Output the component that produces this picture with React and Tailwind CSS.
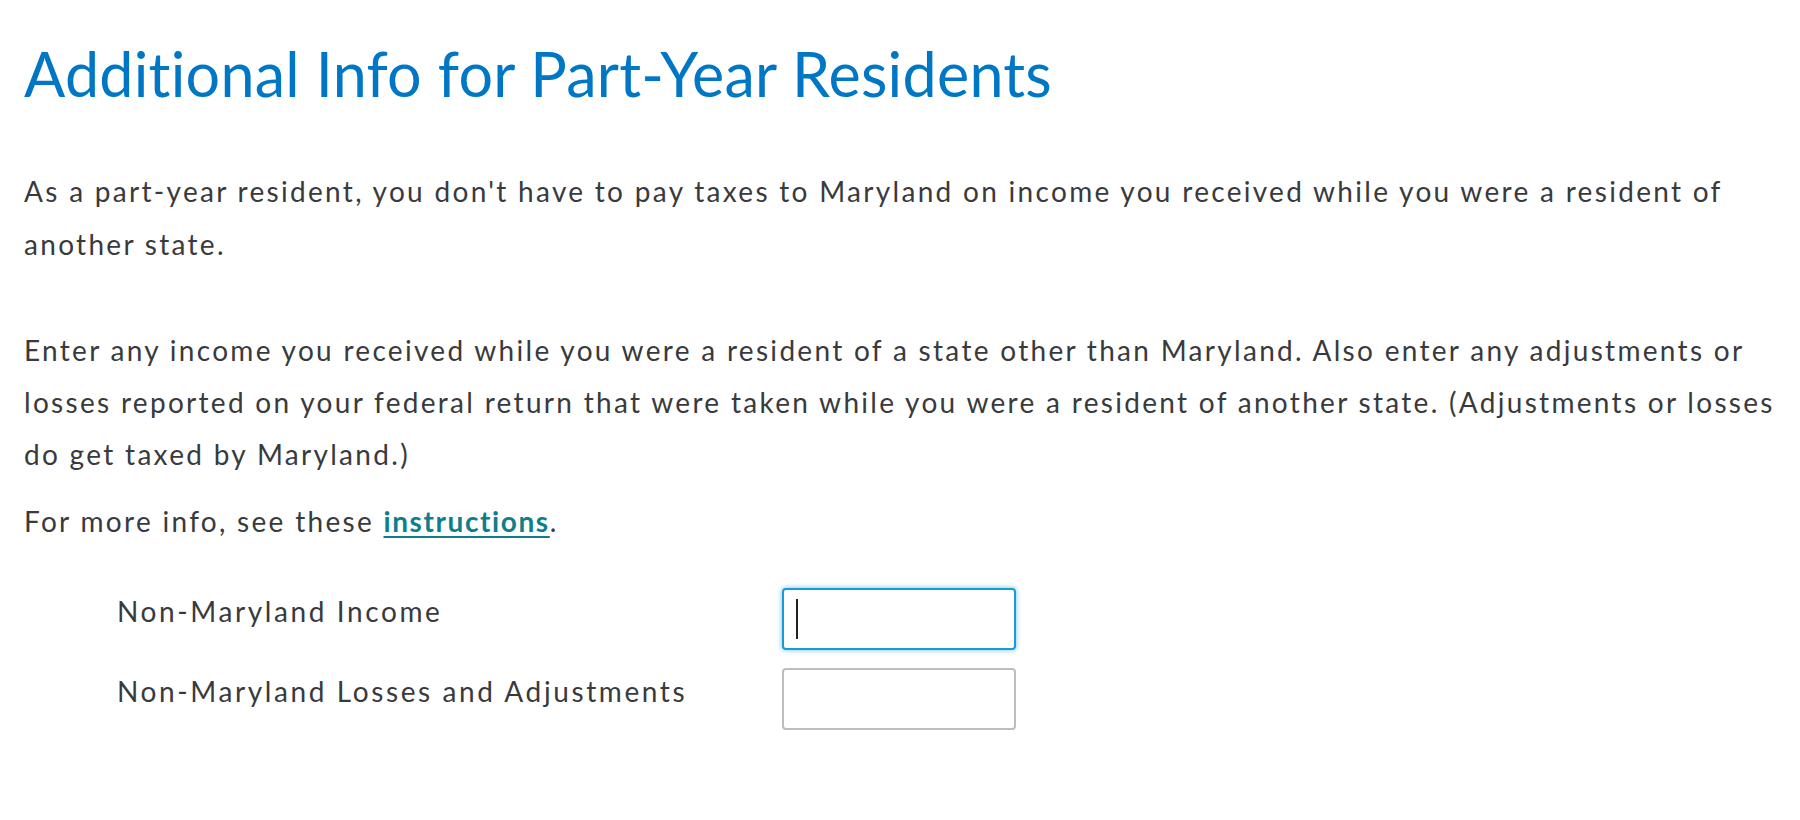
import React from "react";

export default function App() {
  return (
    <div className="min-h-[820px] w-[1800px] bg-white font-['Lato',sans-serif] text-[#393a3d]">
      <div className="pl-[24px] pr-[10px] pt-[38px]">
        <h1 className="text-[61px] leading-[72px] font-normal tracking-[0.25px] text-[#0077c5]">
          Additional Info for Part-Year Residents
        </h1>
        <div className="text-[28px] tracking-[2.3px]">
          <p className="mt-[55px] leading-[53px]">
            As a part-year resident, you don't have to pay taxes to Maryland on income you received while you were a resident of another state.
          </p>
          <p className="mt-[53px] leading-[52px]">
            Enter any income you received while you were a resident of a state other than Maryland. Also enter any adjustments or losses reported on your federal return that were taken while you were a resident of another state. (Adjustments or losses do get taxed by Maryland.)
          </p>
          <p className="mt-[15px] leading-[52px]">
            For more info, see these{" "}
            <a href="#" className="font-bold tracking-[1.6px] text-[#0d7f8c] underline decoration-2 underline-offset-4">
              instructions
            </a>
            .
          </p>
          <div className="mt-[41px] flex flex-col gap-[18px] pl-[93px]">
            <div className="flex items-start">
              <label className="w-[665px] pt-[8px] leading-[30px] tracking-[2.6px]">Non-Maryland Income</label>
              <div className="flex h-[62px] w-[234px] items-center rounded-[4px] border-2 border-[#1a9ad6] bg-white pl-[12px] shadow-[0_0_4px_1px_rgba(26,154,214,0.45)]">
                <span className="block h-[40px] w-[2px] bg-[#222]" />
              </div>
            </div>
            <div className="flex items-start">
              <label className="w-[665px] pt-[8px] leading-[30px] tracking-[2.6px]">Non-Maryland Losses and Adjustments</label>
              <div className="h-[62px] w-[234px] rounded-[4px] border-2 border-[#bdbdbd] bg-white" />
            </div>
          </div>
        </div>
      </div>
    </div>
  );
}
